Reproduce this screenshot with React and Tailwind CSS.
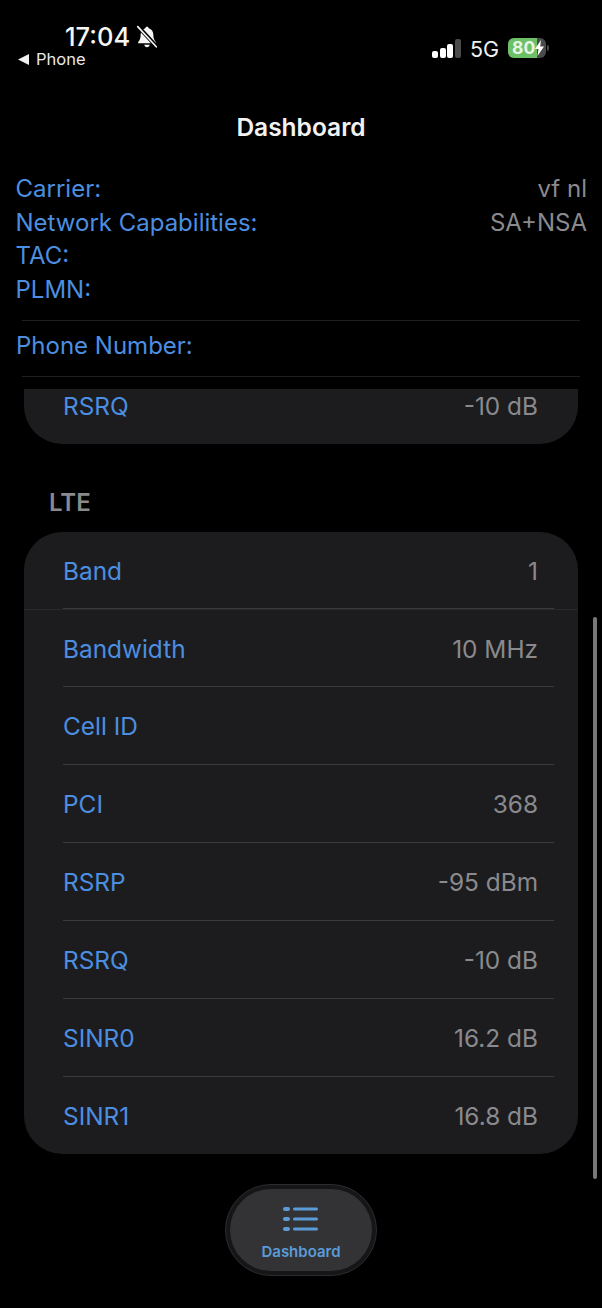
import React from 'react';

const font = { fontFamily: 'Inter, "Liberation Sans", sans-serif' };

const lteRows = [
  { label: 'Band', value: '1', h: 'h-[77px]' },
  { label: 'Bandwidth', value: '10 MHz', h: 'h-[77px]' },
  { label: 'Cell ID', value: '', h: 'h-[78px]' },
  { label: 'PCI', value: '368', h: 'h-[78px]' },
  { label: 'RSRP', value: '-95 dBm', h: 'h-[78px]' },
  { label: 'RSRQ', value: '-10 dB', h: 'h-[78px]' },
  { label: 'SINR0', value: '16.2 dB', h: 'h-[78px]' },
  { label: 'SINR1', value: '16.8 dB', h: 'h-[77px]' },
];

const infoRows = [
  { label: 'Carrier:', value: 'vf nl' },
  { label: 'Network Capabilities:', value: 'SA+NSA' },
  { label: 'TAC:', value: '' },
  { label: 'PLMN:', value: '' },
];

const MutedBell = () => (
  <svg width="24" height="24" viewBox="0 0 22 22" fill="none">
    <path d="M11 1.500c-.9 0-1.500.6-1.600 1.500C6.800 3.700 5.200 6 5.200 8.800c0 3.400-.7 5-2.200 6.700-.5.600-.1 1.300.6 1.300h14.800c.7 0 1.100-.7.600-1.300-1.500-1.700-2.200-3.300-2.200-6.700 0-2.800-1.600-5.100-4.200-5.800-.1-.9-.7-1.500-1.600-1.500z" fill="#f5f5f5" />
    <path d="M8.500 18.200h5c-.2 1.300-1.200 2.200-2.500 2.200s-2.300-.9-2.500-2.200z" fill="#f5f5f5" />
    <path d="M3 1.500L20 20" stroke="#000" strokeWidth="3.600" />
    <path d="M2.500 1.500L19.500 20" stroke="#f5f5f5" strokeWidth="1.500" strokeLinecap="round" />
  </svg>
);

const SignalBars = () => (
  <div className="flex items-end gap-[1.600px] h-[19px]">
    <div className="w-[6px] h-[7px] rounded-[2px] bg-white" />
    <div className="w-[6px] h-[10px] rounded-[2px] bg-white" />
    <div className="w-[6px] h-[14px] rounded-[2px] bg-white" />
    <div className="w-[6px] h-[19px] rounded-[2px] bg-[#4a4a4a]" />
  </div>
);

const Battery = () => (
  <div className="flex items-center gap-[1px] -mt-[1px]">
    <div className="relative w-[38px] h-[20px] rounded-[6px] bg-[#4a4a4c] overflow-hidden">
      <div className="absolute inset-y-0 left-0 w-[29px] bg-[#6cc066]" />
      <span className="absolute left-[4px] top-0 text-[17.500px] leading-[20px] font-bold text-[#e8f5e6]">80</span>
      <svg className="absolute right-[1px] top-[2px]" width="11" height="16" viewBox="0 0 11 16">
        <path d="M7 0L1 9h3.500L3.500 16 10 6.500H6.200z" fill="#fff" />
      </svg>
    </div>
    <div className="w-[2px] h-[6px] rounded-r-full bg-[#4a4a4c]" />
  </div>
);

const DashboardIcon = () => (
  <svg width="36" height="24" viewBox="0 0 36 24" fill="#5b9bd8">
    <rect x="0" y="0" width="7" height="4" rx="2" />
    <rect x="10" y="0.500" width="25" height="3" rx="1.500" />
    <rect x="0" y="10" width="7" height="4" rx="2" />
    <rect x="10" y="10.500" width="25" height="3" rx="1.500" />
    <rect x="0" y="20" width="7" height="4" rx="2" />
    <rect x="10" y="20.500" width="25" height="3" rx="1.500" />
  </svg>
);

const App = () => {
  return (
    <div className="relative w-[602px] h-[1308px] bg-black overflow-hidden" style={font}>
      {/* Status bar */}
      <div className="h-[107px] flex justify-between">
        <div className="pl-[18px] pt-[22px]">
          <div className="pl-[47px] flex items-center gap-[5px] h-[30px]">
            <span className="text-[25.500px] leading-[30px] font-medium text-[#f5f5f5]">17:04</span>
            <MutedBell />
          </div>
          <div className="flex items-center gap-[7px] h-[14px]">
            <svg width="11" height="11" viewBox="0 0 11 11"><path d="M11 0v11L0 5.500z" fill="#f0f0f0" /></svg>
            <span className="text-[16.500px] leading-[14px] text-[#e8e8e8]">Phone</span>
          </div>
        </div>
        <div className="flex items-start gap-[9px] pt-[39px] pr-[53px]">
          <SignalBars />
          <span className="text-[21.500px] leading-[21px] text-[#f0f0f0]">5G</span>
          <Battery />
        </div>
      </div>

      {/* Title */}
      <h1 className="h-[40px] text-center text-[24.500px] leading-[40px] font-semibold text-[#f2f2f2]">Dashboard</h1>

      {/* Device info */}
      <div className="mt-[25px] pl-[15.500px] pr-[15px]">
        {infoRows.map((row) => (
          <div key={row.label} className="flex justify-between h-[33.500px] text-[24px] leading-[34px]">
            <span className="text-[#4c8ee0]">{row.label}</span>
            <span className="text-[#8a8a8e]">{row.value}</span>
          </div>
        ))}
      </div>
      <div className="mx-[22px] mt-[14px] h-[1px] bg-[#1f1f21]" />
      <div className="h-[55px] px-[16px] text-[24px] leading-[50px] text-[#4c8ee0]">Phone Number:</div>
      <div className="mx-[22px] h-[1px] bg-[#1f1f21]" />

      {/* Scrolled list, top card is cut off */}
      <div className="mt-[12px] mx-[24px] h-[55px] rounded-b-[38px] bg-[#1c1c1e] flex justify-between pl-[39px] pr-[40px] text-[24.400px] leading-[35px]">
        <span className="text-[#4c8ee0]">RSRQ</span>
        <span className="text-[#8a8a8e]">-10 dB</span>
      </div>

      <div className="mt-[44px] pl-[49px] h-[30px] text-[24px] leading-[30px] font-semibold text-[#8a8a8e]">LTE</div>

      <div className="mt-[14px] mx-[24px] rounded-[38px] bg-[#1c1c1e]">
        {lteRows.map((row, i) => (
          <div key={row.label} className={`pl-[39px] pr-[24px] ${i === 0 ? 'border-b border-[#29292b]' : ''}`}>
            <div className={`${row.h} flex items-center justify-between pt-[2px] pr-[16px] text-[24.400px] ${i < lteRows.length - 1 ? 'border-b border-[#3a3a3c]' : ''}`}>
              <span className="text-[#4c8ee0]">{row.label}</span>
              <span className="text-[#8a8a8e]">{row.value}</span>
            </div>
          </div>
        ))}
      </div>

      {/* Scroll indicator */}
      <div className="absolute left-[593px] top-[617px] w-[4px] h-[562px] rounded-full bg-[#78787a]" />

      {/* Tab bar */}
      <div className="absolute left-[225px] top-[1184px] w-[152px] h-[92px] rounded-[46px] border border-[#2c2c2e] bg-[#161618] p-[4px]">
        <div className="h-full rounded-[41px] bg-[#333335] flex flex-col items-center pt-[18px]">
          <DashboardIcon />
          <span className="mt-[12px] text-[15px] leading-[18px] font-semibold text-[#5b9bd8]">Dashboard</span>
        </div>
      </div>
    </div>
  );
};

export default App;
